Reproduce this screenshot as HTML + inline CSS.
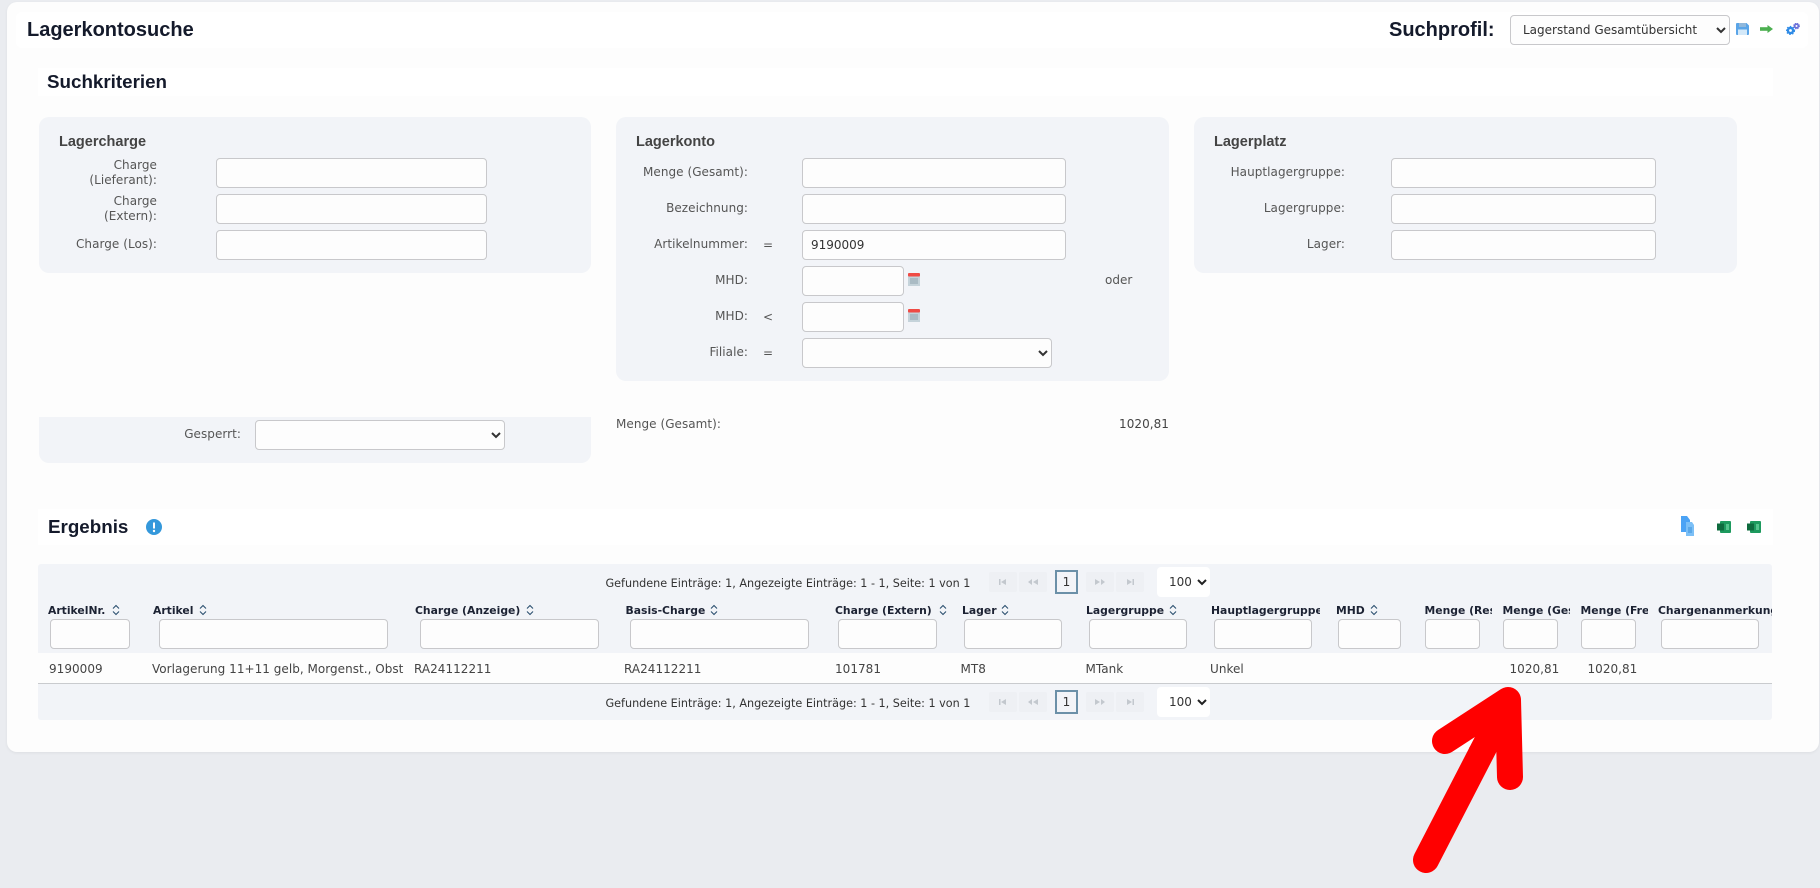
<!DOCTYPE html>
<html lang="de"><head><meta charset="utf-8"><title>Lagerkontosuche</title>
<style>
html,body{margin:0;padding:0;width:1820px;height:888px;overflow:hidden;background:#eaecf0}
body{position:relative;font-family:"DejaVu Sans","Liberation Sans",sans-serif;font-size:12px;color:#555}
.a{position:absolute}
.card{left:7px;top:2px;width:1812px;height:750px;background:#fdfdfd;border-radius:10px;box-shadow:0 1px 3px rgba(0,0,0,.06)}
.strip{background:#fff}
.box{background:#f2f4f8;border-radius:10px}
.h1{font:bold 20px/24px "Liberation Sans",Arial,sans-serif;color:#141a2b;white-space:nowrap}
.h2{font:bold 18.8px/24px "Liberation Sans",Arial,sans-serif;color:#141a2b;white-space:nowrap}
.h3{font:bold 14.5px/18px "Liberation Sans",Arial,sans-serif;color:#444;white-space:nowrap}
.t{position:absolute;white-space:nowrap;line-height:15px;height:15px}
.r{text-align:right;letter-spacing:.05px}
input,select{position:absolute;box-sizing:border-box;height:30px;margin:0;border:1px solid #c8c8cb;border-radius:4px;background:#fdfdfd;font:12px "DejaVu Sans",sans-serif;color:#333;outline:0}
input{padding:0 8px}
.th{position:absolute;top:603px;height:16px;line-height:16px;font-weight:bold;font-size:10.8px;color:#1c2233;white-space:nowrap;overflow:hidden}
.v{color:#444;letter-spacing:.03px}
.pg{position:absolute;background:#eef0f4;border-radius:2px;width:28px;height:20px}
.pg svg{position:absolute;left:7px;top:5px}
.cur{position:absolute;box-sizing:border-box;width:23px;height:24px;border:2px solid #6b90a8;text-align:center;line-height:20px;color:#333;font-size:12px}
.ps{position:absolute;left:1157px;width:53px;height:30px;background:#fff;border-radius:4px;font-size:12px;color:#333}
.ps span{position:absolute;left:12px;top:7px;line-height:16px}
.ps svg{position:absolute;left:40px;top:11px}
.pt{font-size:11.2px;color:#333}
</style></head>
<body>
<div class="a card"></div>
<div class="a strip" style="left:16px;top:12px;width:1792px;height:36px;border-radius:6px"></div>
<div class="a h1" style="left:27px;top:18px">Lagerkontosuche</div>
<div class="a h1" style="left:1389px;top:18px">Suchprofil:</div>
<select style="left:1510px;top:15px;width:220px;padding-left:8px"><option>Lagerstand Gesamtübersicht</option></select>

<svg class="a" style="left:1736px;top:23px" width="13" height="12" viewBox="0 0 13 12"><path d="M0 1a1 1 0 0 1 1-1h9.500L13 2.500V11a1 1 0 0 1-1 1H1a1 1 0 0 1-1-1z" fill="#5aa5e8"/><rect x="3" y="0" width="7" height="4" fill="#8fb8dc"/><rect x="2" y="6.500" width="9" height="5.500" fill="#d4e9f9"/></svg>
<svg class="a" style="left:1760px;top:25px" width="13" height="8" viewBox="0 0 13 8"><path d="M0 4h9" stroke="#4caf50" stroke-width="3.600"/><path d="M7.500 0l5.500 4-5.500 4z" fill="#4caf50"/></svg>
<svg class="a" style="left:1786px;top:23px" width="14" height="12" viewBox="0 0 14 12"><circle cx="4.500" cy="7.500" r="2.600" fill="none" stroke="#2f8be6" stroke-width="2.400"/><circle cx="4.500" cy="7.500" r="4" fill="none" stroke="#2f8be6" stroke-width="1.200" stroke-dasharray="1.500 1.500"/><circle cx="10.500" cy="3" r="1.900" fill="none" stroke="#6a6fd8" stroke-width="1.700"/><circle cx="10.500" cy="3" r="3" fill="none" stroke="#6a6fd8" stroke-width=".8" stroke-dasharray="1.200 1.200"/></svg>

<div class="a strip" style="left:38px;top:68px;width:1735px;height:28px"></div>
<div class="a h2" style="left:47px;top:70px">Suchkriterien</div>

<!-- Lagercharge -->
<div class="a box" style="left:39px;top:117px;width:552px;height:156px"></div>
<div class="a h3" style="left:59px;top:133px">Lagercharge</div>
<div class="t r" style="right:1663px;top:158px">Charge</div>
<div class="t r" style="right:1663px;top:173px">(Lieferant):</div>
<div class="t r" style="right:1663px;top:194px">Charge</div>
<div class="t r" style="right:1663px;top:209px">(Extern):</div>
<div class="t r" style="right:1663px;top:237px">Charge (Los):</div>
<input style="left:216px;top:158px;width:271px">
<input style="left:216px;top:194px;width:271px">
<input style="left:216px;top:230px;width:271px">

<!-- Lagerkonto -->
<div class="a box" style="left:616px;top:117px;width:553px;height:264px"></div>
<div class="a h3" style="left:636px;top:133px">Lagerkonto</div>
<div class="t r" style="right:1072px;top:165px">Menge (Gesamt):</div>
<div class="t r" style="right:1072px;top:201px">Bezeichnung:</div>
<div class="t r" style="right:1072px;top:237px">Artikelnummer:</div>
<div class="t r" style="right:1072px;top:273px">MHD:</div>
<div class="t r" style="right:1072px;top:309px">MHD:</div>
<div class="t r" style="right:1072px;top:345px">Filiale:</div>
<div class="t" style="left:763px;top:238px">=</div>
<div class="t" style="left:763px;top:310px">&lt;</div>
<div class="t" style="left:763px;top:346px">=</div>
<input style="left:802px;top:158px;width:264px">
<input style="left:802px;top:194px;width:264px">
<input value="9190009" style="left:802px;top:230px;width:264px">
<input style="left:802px;top:266px;width:102px">
<input style="left:802px;top:302px;width:102px">
<select style="left:802px;top:338px;width:250px"><option></option></select>
<svg class="a" style="left:907px;top:273px" width="14" height="13" viewBox="0 0 14 13"><rect x="1" y="2" width="12" height="11" fill="#c5d3da"/><rect x="1" y="0" width="12" height="3.500" rx="1" fill="#ef4b45"/><path d="M3 6h8M3 8h8M3 10h8" stroke="#8fa3ad"/></svg>
<svg class="a" style="left:907px;top:309px" width="14" height="13" viewBox="0 0 14 13"><rect x="1" y="2" width="12" height="11" fill="#c5d3da"/><rect x="1" y="0" width="12" height="3.500" rx="1" fill="#ef4b45"/><path d="M3 6h8M3 8h8M3 10h8" stroke="#8fa3ad"/></svg>
<div class="t" style="left:1105px;top:273px">oder</div>

<!-- Lagerplatz -->
<div class="a box" style="left:1194px;top:117px;width:543px;height:156px"></div>
<div class="a h3" style="left:1214px;top:133px">Lagerplatz</div>
<div class="t r" style="right:475px;top:165px">Hauptlagergruppe:</div>
<div class="t r" style="right:475px;top:201px">Lagergruppe:</div>
<div class="t r" style="right:475px;top:237px">Lager:</div>
<input style="left:1391px;top:158px;width:265px">
<input style="left:1391px;top:194px;width:265px">
<input style="left:1391px;top:230px;width:265px">

<!-- Gesperrt -->
<div class="a box" style="left:39px;top:417px;width:552px;height:46px;border-radius:0 0 10px 10px"></div>
<div class="t r" style="right:1579px;top:427px">Gesperrt:</div>
<select style="left:255px;top:420px;width:250px"><option></option></select>
<div class="t" style="left:616px;top:417px;letter-spacing:.05px">Menge (Gesamt):</div>
<div class="t r" style="right:651px;top:417px;color:#444">1020,81</div>

<!-- Ergebnis -->
<div class="a strip" style="left:38px;top:509px;width:1735px;height:36px"></div>
<div class="a h2" style="left:48px;top:515px">Ergebnis</div>
<svg class="a" style="left:146px;top:519px" width="16" height="16" viewBox="0 0 16 16"><circle cx="8" cy="8" r="8" fill="#3498db"/><path d="M8 3.500v6" stroke="#fff" stroke-width="2"/><circle cx="8" cy="12" r="1.200" fill="#fff"/></svg>
<svg class="a" style="left:1681px;top:516px" width="13" height="20" viewBox="0 0 13 20"><path d="M0 0h6l3 4v12H0z" fill="#4ba3f5"/><path d="M5 6h6l2 3v11H5z" fill="#7cc0f7"/><path d="M7 12h4M7 14h4M7 16h4" stroke="#3a8fd8"/></svg>
<svg class="a" style="left:1717px;top:521px" width="14" height="12" viewBox="0 0 14 12"><rect x="3" y="0" width="11" height="12" rx="1" fill="#1d9a5e"/><rect x="0" y="2.500" width="7" height="7" fill="#0e6b3e"/><rect x="9" y="3" width="3" height="6" fill="#54c48c"/></svg>
<svg class="a" style="left:1747px;top:521px" width="14" height="12" viewBox="0 0 14 12"><rect x="3" y="0" width="11" height="12" rx="1" fill="#1d9a5e"/><rect x="0" y="2.500" width="7" height="7" fill="#0e6b3e"/><rect x="9" y="3" width="3" height="6" fill="#54c48c"/></svg>

<!-- Table -->
<div class="a" style="left:38px;top:564px;width:1734px;height:156px;background:#f2f4f8;border-radius:3px"></div>
<div class="a" style="left:38px;top:653px;width:1734px;height:30px;background:#fdfdfd;border-bottom:1px solid #c9cbce"></div>

<!-- pager top -->
<div class="t pt" style="left:605.500px;top:576px">Gefundene Einträge: 1, Angezeigte Einträge: 1 - 1, Seite: 1 von 1</div>
<div class="pg" style="left:989px;top:572px"><svg width="14" height="10" viewBox="0 0 14 10"><path d="M3 2v6h1.500V2zM5 5l5-3v6z" fill="#c3c8ce"/></svg></div>
<div class="pg" style="left:1019px;top:572px"><svg width="14" height="10" viewBox="0 0 14 10"><path d="M2 5l4-3v6zM7 5l5-3v6z" fill="#c3c8ce"/></svg></div>
<div class="cur" style="left:1055px;top:570px">1</div>
<div class="pg" style="left:1086px;top:572px"><svg width="14" height="10" viewBox="0 0 14 10"><path d="M12 5l-4-3v6zM7 5L2 2v6z" fill="#c3c8ce"/></svg></div>
<div class="pg" style="left:1116px;top:572px"><svg width="14" height="10" viewBox="0 0 14 10"><path d="M11 2v6H9.500V2zM9 5L4 2v6z" fill="#c3c8ce"/></svg></div>
<div class="ps" style="top:567px"><span>100</span><svg width="10" height="8" viewBox="0 0 10 8"><path d="M1 2l4 4 4-4" fill="none" stroke="#222" stroke-width="2"/></svg></div>

<!-- header -->
<div class="th" style="left:48px">ArtikelNr.</div>
<div class="th" style="left:153px">Artikel</div>
<div class="th" style="left:415px">Charge (Anzeige)</div>
<div class="th" style="left:625.500px">Basis-Charge</div>
<div class="th" style="left:835px">Charge (Extern)</div>
<div class="th" style="left:962px">Lager</div>
<div class="th" style="left:1086px">Lagergruppe</div>
<div class="th" style="left:1211px;width:109px">Hauptlagergruppe</div>
<div class="th" style="left:1336px">MHD</div>
<div class="th" style="left:1424.500px;width:67px">Menge (Reserviert)</div>
<div class="th" style="left:1502.500px;width:67px">Menge (Gesamt)</div>
<div class="th" style="left:1580.500px;width:67px">Menge (Frei)</div>
<div class="th" style="left:1658px;width:114px">Chargenanmerkung</div>

<svg class="a" style="left:112px;top:604px" width="8" height="12" viewBox="0 0 8 12"><path d="M1 4.500l3-3 3 3M1 7.500l3 3 3-3" fill="none" stroke="#2b4f6e" stroke-width="1.100"/></svg>
<svg class="a" style="left:199px;top:604px" width="8" height="12" viewBox="0 0 8 12"><path d="M1 4.500l3-3 3 3M1 7.500l3 3 3-3" fill="none" stroke="#2b4f6e" stroke-width="1.100"/></svg>
<svg class="a" style="left:526px;top:604px" width="8" height="12" viewBox="0 0 8 12"><path d="M1 4.500l3-3 3 3M1 7.500l3 3 3-3" fill="none" stroke="#2b4f6e" stroke-width="1.100"/></svg>
<svg class="a" style="left:710px;top:604px" width="8" height="12" viewBox="0 0 8 12"><path d="M1 4.500l3-3 3 3M1 7.500l3 3 3-3" fill="none" stroke="#2b4f6e" stroke-width="1.100"/></svg>
<svg class="a" style="left:939px;top:604px" width="8" height="12" viewBox="0 0 8 12"><path d="M1 4.500l3-3 3 3M1 7.500l3 3 3-3" fill="none" stroke="#2b4f6e" stroke-width="1.100"/></svg>
<svg class="a" style="left:1001px;top:604px" width="8" height="12" viewBox="0 0 8 12"><path d="M1 4.500l3-3 3 3M1 7.500l3 3 3-3" fill="none" stroke="#2b4f6e" stroke-width="1.100"/></svg>
<svg class="a" style="left:1169px;top:604px" width="8" height="12" viewBox="0 0 8 12"><path d="M1 4.500l3-3 3 3M1 7.500l3 3 3-3" fill="none" stroke="#2b4f6e" stroke-width="1.100"/></svg>
<svg class="a" style="left:1370px;top:604px" width="8" height="12" viewBox="0 0 8 12"><path d="M1 4.500l3-3 3 3M1 7.500l3 3 3-3" fill="none" stroke="#2b4f6e" stroke-width="1.100"/></svg>

<input style="left:50px;top:619px;width:80px">
<input style="left:159px;top:619px;width:229px">
<input style="left:420px;top:619px;width:179px">
<input style="left:630px;top:619px;width:179px">
<input style="left:838px;top:619px;width:99px">
<input style="left:964px;top:619px;width:98px">
<input style="left:1089px;top:619px;width:98px">
<input style="left:1214px;top:619px;width:98px">
<input style="left:1338px;top:619px;width:63px">
<input style="left:1425px;top:619px;width:55px">
<input style="left:1503px;top:619px;width:55px">
<input style="left:1581px;top:619px;width:55px">
<input style="left:1661px;top:619px;width:98px">

<!-- row -->
<div class="t v" style="left:49px;top:662px">9190009</div>
<div class="t v" style="left:152px;top:662px">Vorlagerung 11+11 gelb, Morgenst., Obst</div>
<div class="t v" style="left:414px;top:662px">RA24112211</div>
<div class="t v" style="left:624px;top:662px">RA24112211</div>
<div class="t v" style="left:835px;top:662px">101781</div>
<div class="t v" style="left:960.500px;top:662px">MT8</div>
<div class="t v" style="left:1085.500px;top:662px">MTank</div>
<div class="t v" style="left:1210px;top:662px">Unkel</div>
<div class="t v" style="left:1509.500px;top:662px">1020,81</div>
<div class="t v" style="left:1587.500px;top:662px">1020,81</div>

<!-- pager bottom -->
<div class="t pt" style="left:605.500px;top:696px">Gefundene Einträge: 1, Angezeigte Einträge: 1 - 1, Seite: 1 von 1</div>
<div class="pg" style="left:989px;top:692px"><svg width="14" height="10" viewBox="0 0 14 10"><path d="M3 2v6h1.500V2zM5 5l5-3v6z" fill="#c3c8ce"/></svg></div>
<div class="pg" style="left:1019px;top:692px"><svg width="14" height="10" viewBox="0 0 14 10"><path d="M2 5l4-3v6zM7 5l5-3v6z" fill="#c3c8ce"/></svg></div>
<div class="cur" style="left:1055px;top:690px">1</div>
<div class="pg" style="left:1086px;top:692px"><svg width="14" height="10" viewBox="0 0 14 10"><path d="M12 5l-4-3v6zM7 5L2 2v6z" fill="#c3c8ce"/></svg></div>
<div class="pg" style="left:1116px;top:692px"><svg width="14" height="10" viewBox="0 0 14 10"><path d="M11 2v6H9.500V2zM9 5L4 2v6z" fill="#c3c8ce"/></svg></div>
<div class="ps" style="top:687px"><span>100</span><svg width="10" height="8" viewBox="0 0 10 8"><path d="M1 2l4 4 4-4" fill="none" stroke="#222" stroke-width="2"/></svg></div>

<!-- red arrow -->
<svg class="a" style="left:0;top:0" width="1820" height="888" viewBox="0 0 1820 888">
<path d="M1426 860L1506 705" fill="none" stroke="#f00" stroke-width="26" stroke-linecap="round"/>
<path d="M1508 700L1469 748L1491 762z" fill="#f00"/>
<path d="M1445 741L1508 700L1510 777" fill="none" stroke="#f00" stroke-width="26" stroke-linecap="round" stroke-linejoin="round"/>
</svg>
</body></html>
